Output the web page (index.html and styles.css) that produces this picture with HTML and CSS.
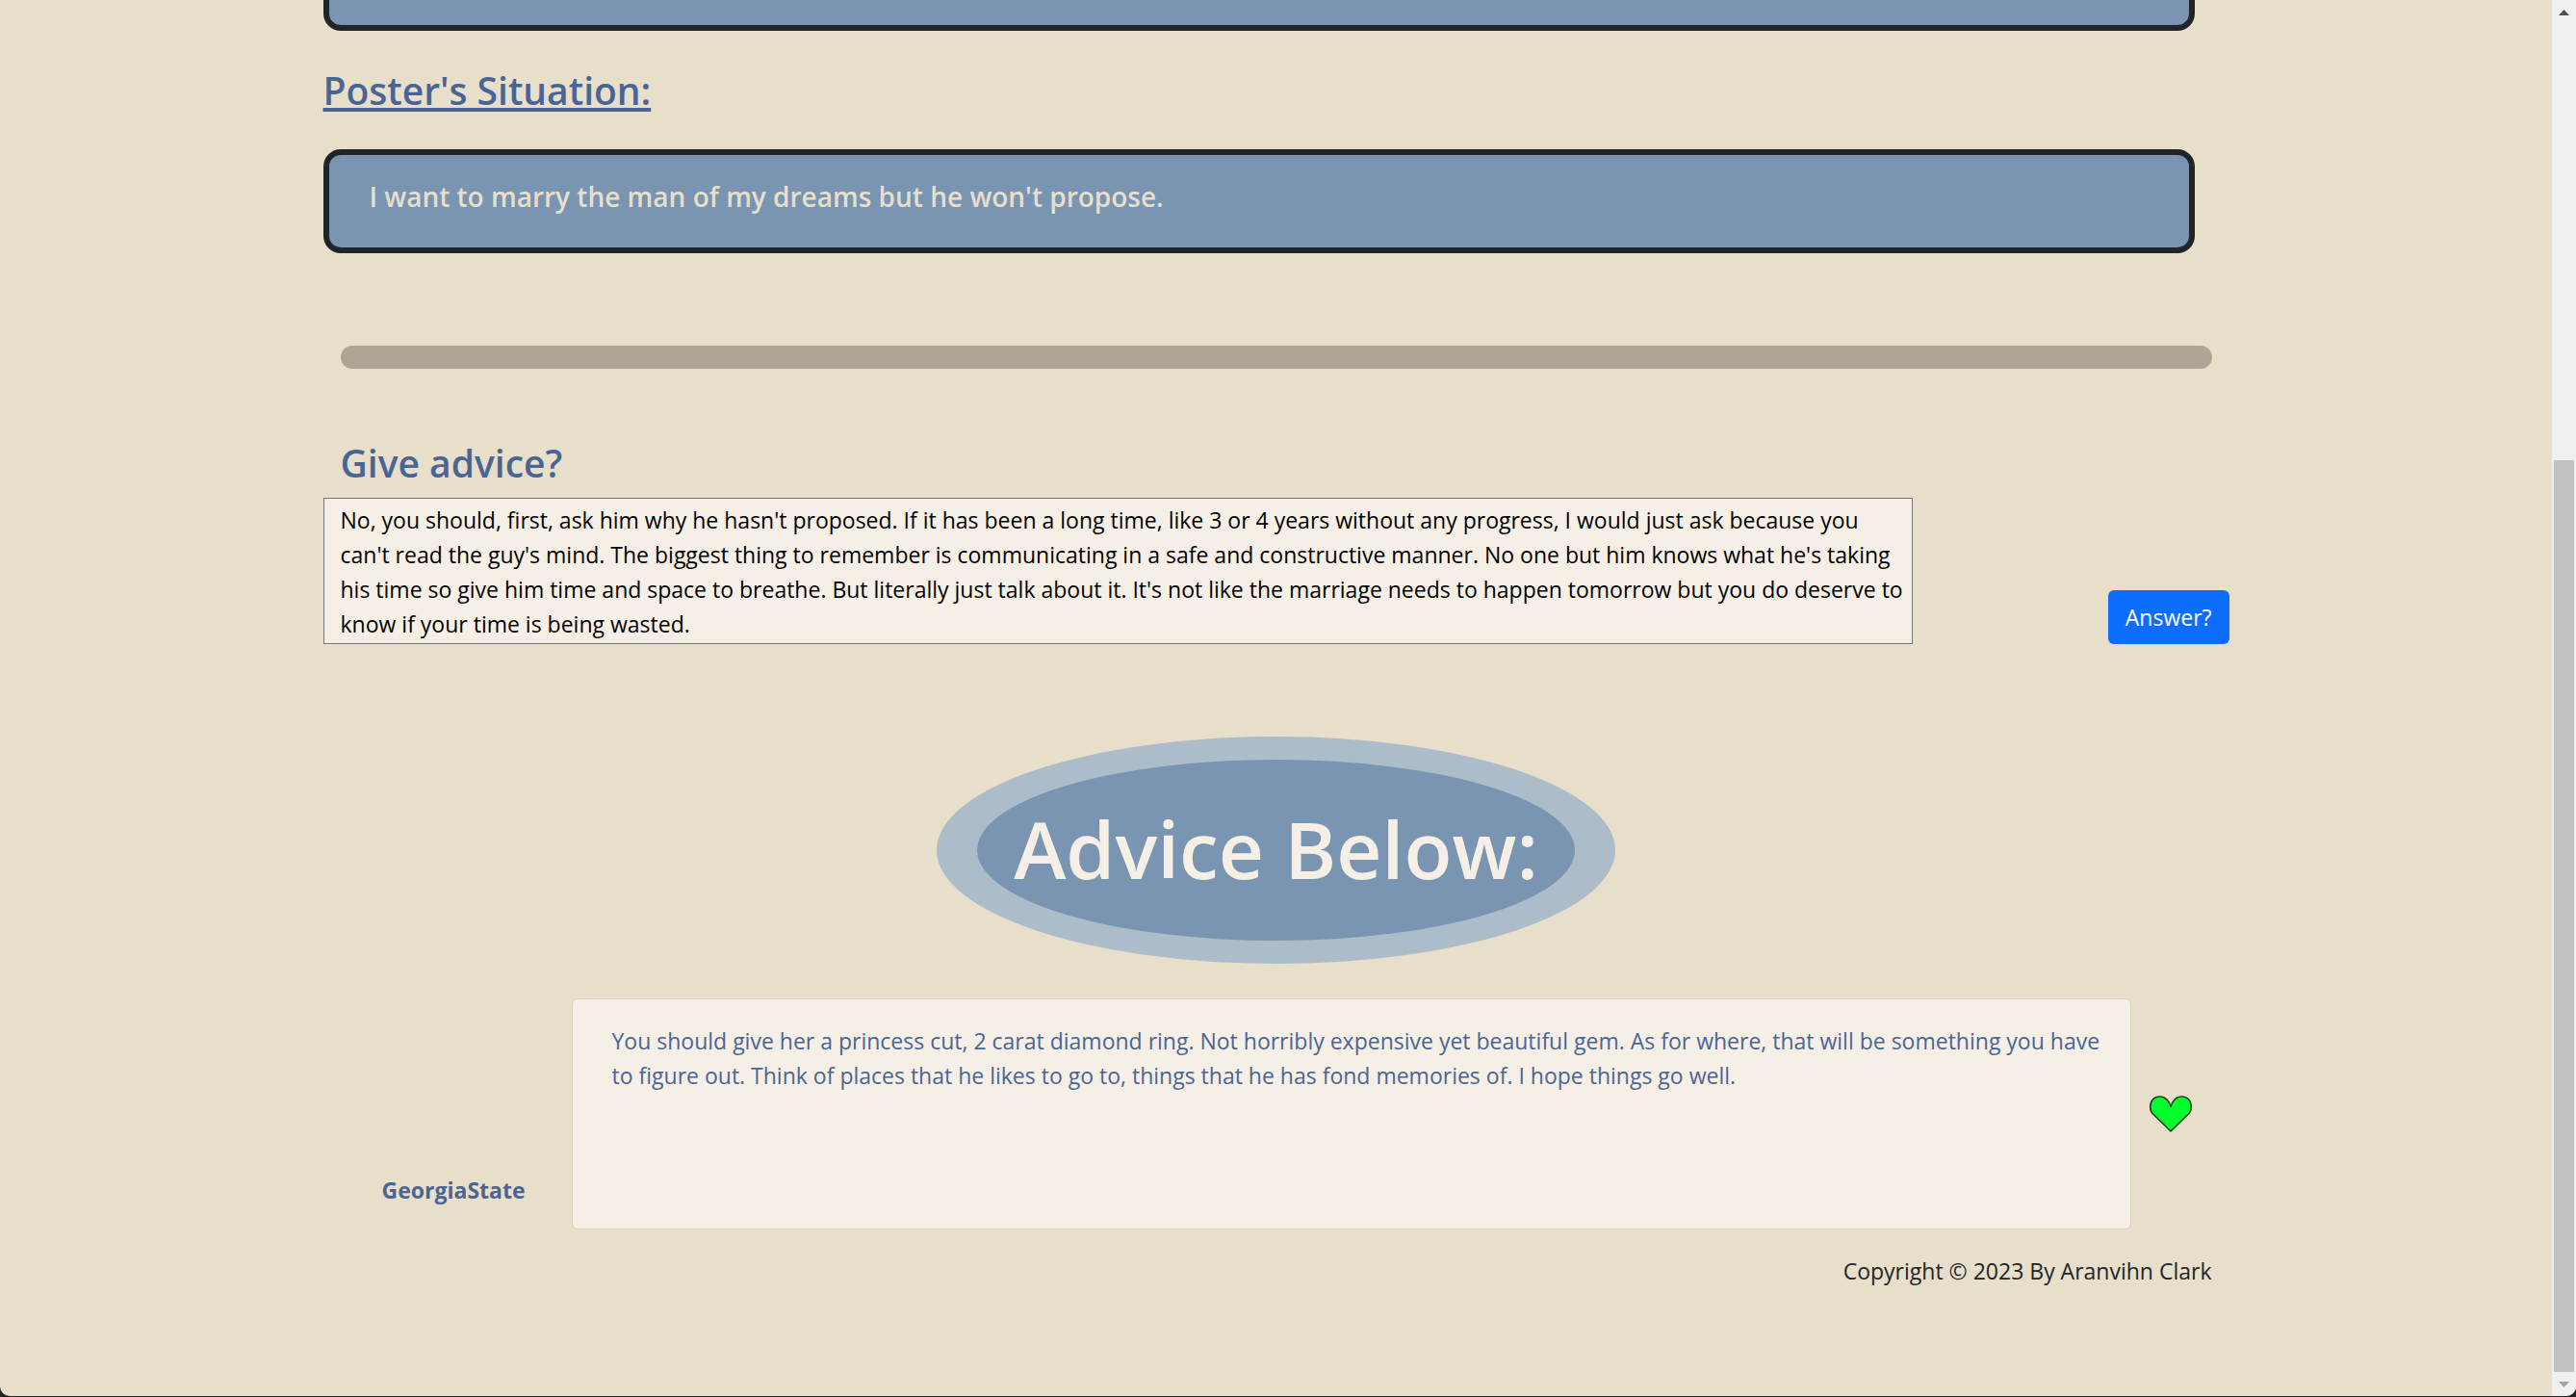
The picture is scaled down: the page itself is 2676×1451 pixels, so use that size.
FILE: index.html
```html
<!DOCTYPE html>
<html lang="en">
<head>
  <meta charset="utf-8">
  <meta name="viewport" content="width=device-width, initial-scale=1">
  <title>Advice</title>
  <link rel="stylesheet" href="styles.css">
</head>
<body>
  <div class="window">
    <main class="page">
      <div class="container">
        <div class="panel panel-cut"></div>

        <h2 class="heading heading-underlined">Poster's Situation:</h2>
        <div class="panel">
          <p class="panel-text">I want to marry the man of my dreams but he won't propose.</p>
        </div>

        <hr class="divider">

        <h2 class="heading heading-form"><label for="advice">Give advice?</label></h2>
        <form class="advice-form">
          <textarea id="advice" class="advice-input" rows="4" spellcheck="false">No, you should, first, ask him why he hasn't proposed. If it has been a long time, like 3 or 4 years without any progress, I would just ask because you can't read the guy's mind. The biggest thing to remember is communicating in a safe and constructive manner. No one but him knows what he's taking his time so give him time and space to breathe. But literally just talk about it. It's not like the marriage needs to happen tomorrow but you do deserve to know if your time is being wasted.</textarea>
          <button type="button" class="btn">Answer?</button>
        </form>

        <h1 class="banner">Advice Below:</h1>

        <article class="answer">
          <strong class="answer-author">GeorgiaState</strong>
          <p class="answer-card">You should give her a princess cut, 2 carat diamond ring. Not horribly expensive yet beautiful gem. As for where, that will be something you have to figure out. Think of places that he likes to go to, things that he has fond memories of. I hope things go well.</p>
          <button type="button" class="like" aria-label="Like">
            <svg width="44" height="38" viewBox="0 0 44 38" aria-hidden="true">
              <path d="M22 37 L3 18.500 C1 16.500 0.700 14 0.700 11.500 C0.700 5 5 0.900 10.500 0.900 C16 0.900 21 5.500 22 12 C23 5.500 28 0.900 33.500 0.900 C39 0.900 43.300 5 43.300 11.500 C43.300 14 43 16.500 41 18.500 Z" fill="#00ff2b" stroke="#1c2b1c" stroke-width="1.400"/>
            </svg>
          </button>
        </article>

        <footer class="footer">Copyright © 2023 By Aranvihn Clark</footer>
      </div>
    </main>

    <div class="scrollbar" aria-hidden="true">
      <svg class="scroll-arrow" viewBox="0 0 25 25"><path d="M7 16 L12.500 10 L18 16 Z" fill="#505050"/></svg>
      <div class="scroll-track"><div class="scroll-thumb"></div></div>
      <svg class="scroll-arrow" viewBox="0 0 25 25"><path d="M7 10 L12.500 16 L18 10 Z" fill="#a3a3a3"/></svg>
    </div>
  </div>
</body>
</html>
```
FILE: styles.css
```css
* {
  box-sizing: border-box;
}

body {
  margin: 0;
  background: #222226;
  color: #212529;
  font: 400 23px/36px "Open Sans", "Noto Sans", sans-serif;
}

h1,
h2,
p {
  margin: 0;
}

.window {
  display: flex;
  min-height: calc(100vh - 1px);
  margin-bottom: 1px;
  border-radius: 0 0 10px 10px;
  overflow: hidden;
  background: #e7dfca;
}

.page {
  flex: 1;
  min-width: 0;
}

.container {
  max-width: 1980px;
  margin: 0 auto;
}

/* Question panels */
.panel {
  margin-right: 36px;
  padding: 25px 42px 35px;
  border: 6px solid #212529;
  border-radius: 18px;
  background: #7995b2;
  color: #e7dfca;
}

.panel-cut {
  height: 32px;
  padding: 0;
  border-top: 0;
  border-radius: 0 0 18px 18px;
}

.panel-text {
  font-size: 28px;
  font-weight: 600;
}

.heading {
  color: #4a6595;
  font-size: 39px;
  font-weight: 600;
  line-height: 48px;
}

.heading-underlined {
  margin: 38px 0 37px;
  text-decoration: underline 4px;
  text-underline-offset: 3px;
}

.divider {
  height: 24px;
  margin: 96px 18px 74px;
  border: 0;
  border-radius: 12px;
  background: #aea695;
}

/* Advice form */
.heading-form {
  margin: 0 18px 12px;
}

.advice-form {
  display: flex;
  align-items: flex-end;
  justify-content: space-between;
}

.advice-input {
  display: block;
  width: 83.4%;
  height: 152px;
  padding: 4px 4px 2px 17px;
  border: 1px solid #767676;
  border-radius: 0;
  background: #f6efe5;
  color: #000;
  font: inherit;
  resize: none;
  overflow: hidden;
}

.btn {
  padding: 10px 18px;
  border: 0;
  border-radius: 6px;
  background: #0d6efd;
  color: #fff;
  font: inherit;
}

/* Section banner */
.banner {
  width: 705px;
  max-width: 100%;
  margin: 96px auto 36px;
  padding: 36px 0 40px;
  border: solid #adbcc9;
  border-width: 24px 42px;
  border-radius: 50%;
  background: #7995b2;
  color: #f6efe5;
  font-size: 82px;
  font-weight: 600;
  line-height: 112px;
  text-align: center;
}

/* Answers */
.answer {
  display: grid;
  grid-template-columns: 258px 1fr 102px;
}

.answer-author {
  align-self: end;
  padding: 0 48px 23px 0;
  color: #4a6595;
  text-align: right;
}

.answer-card {
  min-height: 240px;
  padding: 25px 24px 25px 41px;
  border: 1px solid #d8d2c8;
  border-radius: 6px;
  background: #f6efe5;
  color: #4a6595;
}

.like {
  align-self: center;
  justify-self: start;
  margin-left: 19px;
  padding: 0;
  border: 0;
  background: none;
}

.like svg {
  display: block;
}

.footer {
  margin: 25px 18px 36px 0;
  text-align: right;
}

/* Window scrollbar */
.scrollbar {
  display: flex;
  flex-direction: column;
  width: 25px;
  background: #f0f0f0;
}

.scroll-arrow {
  display: block;
  height: 25px;
}

.scroll-track {
  display: flex;
  flex: 1;
  align-items: flex-end;
  padding: 0 2px;
}

.scroll-thumb {
  width: 100%;
  height: calc(68% - 5px);
  background: #c1c1c1;
}
```
